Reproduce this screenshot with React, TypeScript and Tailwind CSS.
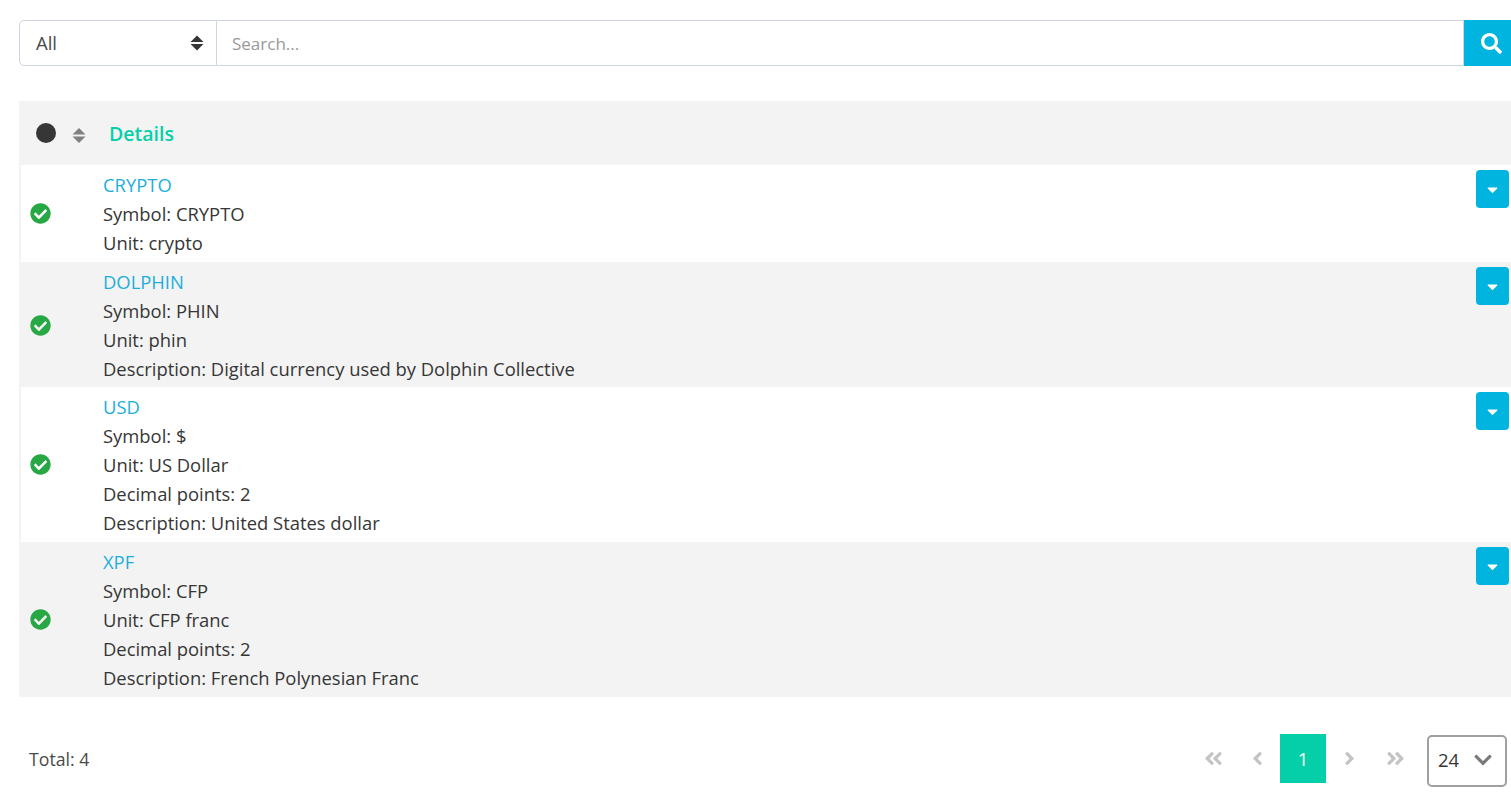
import {
  FaAngleDoubleLeft,
  FaAngleDoubleRight,
  FaAngleLeft,
  FaAngleRight,
  FaCaretDown,
  FaCheckCircle,
  FaChevronDown,
  FaSearch,
} from 'react-icons/fa';

interface Currency {
  readonly name: string;
  readonly lines: readonly string[];
  readonly padding: string;
}

const currencies: readonly Currency[] = [
  { name: 'CRYPTO', lines: ['Symbol: CRYPTO', 'Unit: crypto'], padding: 'pt-[5px] pb-[5px]' },
  {
    name: 'DOLPHIN',
    lines: ['Symbol: PHIN', 'Unit: phin', 'Description: Digital currency used by Dolphin Collective'],
    padding: 'pt-[5px] pb-[4px]',
  },
  {
    name: 'USD',
    lines: ['Symbol: $', 'Unit: US Dollar', 'Decimal points: 2', 'Description: United States dollar'],
    padding: 'pt-[5px] pb-[5px]',
  },
  {
    name: 'XPF',
    lines: ['Symbol: CFP', 'Unit: CFP franc', 'Decimal points: 2', 'Description: French Polynesian Franc'],
    padding: 'pt-[5px] pb-[5px]',
  },
];

function SortArrows({ className }: { className: string }) {
  return (
    <svg viewBox="0 0 14 16" className={className} fill="currentColor" aria-hidden="true">
      <path d="M7 0.5 13.5 7H0.5Z" />
      <path d="M7 15.5 13.5 9H0.5Z" />
    </svg>
  );
}

function CurrencyRow({ currency, striped }: { currency: Currency; striped: boolean }) {
  return (
    <div
      className={`flex items-stretch border-l-2 border-[#f3f3f3] ${striped ? 'bg-[#f3f3f3]' : 'bg-white'} ${currency.padding}`}
    >
      <div className="flex w-[82px] shrink-0 items-center pl-[9px]">
        <FaCheckCircle className="h-[21px] w-[21px] text-[#28a745]" />
      </div>
      <div className="min-w-0 flex-1 text-[18.4px] leading-[29px] text-[#363636]">
        <a className="block text-[#1eaedb]">{currency.name}</a>
        {currency.lines.map((line) => (
          <div key={line}>{line}</div>
        ))}
      </div>
      <div className="flex w-[35px] shrink-0 justify-start">
        <button className="flex h-[38px] w-[33px] items-center justify-center rounded-[4px] bg-[#00b4e0] text-white">
          <FaCaretDown className="h-[17px] w-[17px]" />
        </button>
      </div>
    </div>
  );
}

export default function App() {
  return (
    <div className="h-[812px] overflow-hidden bg-white pt-[20px] pl-[19px] font-['Open_Sans',sans-serif] text-[#363636]">
      <div className="flex h-[46px] w-[1492px]">
        <div className="flex w-[198px] items-center justify-between rounded-l-[5px] border border-[#ced4e0] pr-[12px] pl-[16px]">
          <span className="text-[18.5px] text-[#4a4a4a]">All</span>
          <SortArrows className="h-[16px] w-[14px] text-[#363636]" />
        </div>
        <div className="flex flex-1 items-center border-y border-r border-[#ced4e0] pt-[2px] pl-[15px] text-[17px] text-[#999]">
          Search...
        </div>
        <button className="flex w-[47px] items-center justify-center bg-[#00b4e0] pl-[7px] text-white">
          <FaSearch className="h-[21px] w-[21px]" />
        </button>
      </div>

      <div className="mt-[35px] flex h-[64px] w-[1492px] items-center bg-[#f3f3f3]">
        <span className="ml-[17px] h-[20px] w-[20px] rounded-full bg-[#363636]" />
        <SortArrows className="mt-[5px] ml-[16px] h-[17px] w-[14px] text-[#808080]" />
        <span className="ml-[23px] pt-[2px] text-[19.5px] font-semibold text-[#05cfa8]">Details</span>
      </div>

      <div className="w-[1492px]">
        {currencies.map((currency, index) => (
          <CurrencyRow key={currency.name} currency={currency} striped={index % 2 === 1} />
        ))}
      </div>

      <div className="mt-[37px] flex w-[1488px] items-center justify-between">
        <span className="mb-[3px] pl-[10px] text-[17.7px] text-[#4a4a4a]">Total: 4</span>
        <div className="flex items-start text-[#c4c4c4]">
          <div className="flex items-center">
            <FaAngleDoubleLeft className="h-[21px] w-[21px]" />
            <FaAngleLeft className="ml-[26px] h-[21px] w-[15px]" />
            <span className="ml-[15px] flex h-[49px] w-[46px] items-center justify-center bg-[#05cfa8] text-[18.5px] text-white">
              1
            </span>
            <FaAngleRight className="ml-[16px] h-[21px] w-[15px]" />
            <FaAngleDoubleRight className="ml-[28px] h-[21px] w-[21px]" />
          </div>
          <div className="mt-[1px] ml-[21px] flex h-[52px] w-[80px] items-center justify-between rounded-[5px] border-2 border-[#a0a0a0] pr-[12px] pb-[2px] pl-[9px] text-[18.5px] text-[#363636]">
            <span>24</span>
            <FaChevronDown className="h-[20px] w-[20px] text-[#7a7a7a]" />
          </div>
        </div>
      </div>
    </div>
  );
}
